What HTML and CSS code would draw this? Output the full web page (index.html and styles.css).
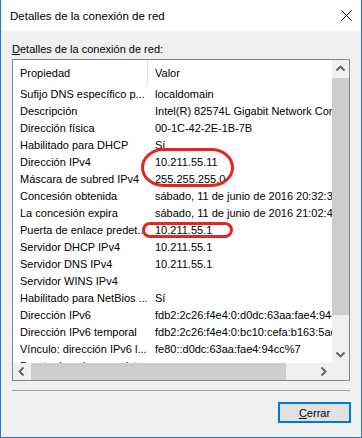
FILE: index.html
```html
<!DOCTYPE html>
<html lang="es">
<head>
<meta charset="utf-8">
<title>Detalles de la conexión de red</title>
<link rel="stylesheet" href="styles.css">
</head>
<body>
<div class="window">
  <div class="titlebar">
    <span class="title">Detalles de la conexión de red</span>
    <svg class="close" width="11" height="11" viewBox="0 0 11 11"><path d="M0.5 0.5 L10.5 10.5 M10.5 0.5 L0.5 10.5" stroke="#000" stroke-width="1" fill="none"/></svg>
  </div>
  <div class="client">
    <div class="caption"><span class="mn">D</span>etalles de la conexión de red:</div>
    <div class="listbox">
      <div class="viewport">
        <div class="header"><div class="c1">Propiedad</div><div class="c2 hsep">Valor</div></div>
        <div class="row"><div class="c1">Sufijo DNS específico p...</div><div class="c2">localdomain</div></div>
        <div class="row"><div class="c1">Descripción</div><div class="c2">Intel(R) 82574L Gigabit Network Connection</div></div>
        <div class="row"><div class="c1">Dirección física</div><div class="c2">00-1C-42-2E-1B-7B</div></div>
        <div class="row"><div class="c1">Habilitado para DHCP</div><div class="c2">Sí</div></div>
        <div class="row"><div class="c1">Dirección IPv4</div><div class="c2">10.211.55.11</div></div>
        <div class="row"><div class="c1">Máscara de subred IPv4</div><div class="c2">255.255.255.0</div></div>
        <div class="row"><div class="c1">Concesión obtenida</div><div class="c2">sábado, 11 de junio de 2016 20:32:35</div></div>
        <div class="row"><div class="c1">La concesión expira</div><div class="c2">sábado, 11 de junio de 2016 21:02:44</div></div>
        <div class="row"><div class="c1">Puerta de enlace predet...</div><div class="c2">10.211.55.1</div></div>
        <div class="row"><div class="c1">Servidor DHCP IPv4</div><div class="c2">10.211.55.1</div></div>
        <div class="row"><div class="c1">Servidor DNS IPv4</div><div class="c2">10.211.55.1</div></div>
        <div class="row"><div class="c1">Servidor WINS IPv4</div><div class="c2"></div></div>
        <div class="row"><div class="c1">Habilitado para NetBios ...</div><div class="c2">Sí</div></div>
        <div class="row"><div class="c1">Dirección IPv6</div><div class="c2">fdb2:2c26:f4e4:0:d0dc:63aa:fae4:94cc</div></div>
        <div class="row"><div class="c1">Dirección IPv6 temporal</div><div class="c2">fdb2:2c26:f4e4:0:bc10:cefa:b163:5ad4</div></div>
        <div class="row"><div class="c1">Vínculo: dirección IPv6 l...</div><div class="c2">fe80::d0dc:63aa:fae4:94cc%7</div></div>
        <div class="row"><div class="c1">Puerta de enlace predet...</div><div class="c2"></div></div>
      </div>
      <div class="vscroll">
        <div class="sbtn"><svg width="17" height="17" viewBox="0 0 17 17"><polyline points="4.5,10.5 8.5,6.5 12.5,10.5" fill="none" stroke="#606060" stroke-width="1.8"/></svg></div>
        <div class="vthumb"></div>
        <div class="fill"></div>
        <div class="sbtn"><svg width="17" height="17" viewBox="0 0 17 17"><polyline points="4.5,6.5 8.5,10.5 12.5,6.5" fill="none" stroke="#606060" stroke-width="1.8"/></svg></div>
      </div>
      <div class="hscroll">
        <div class="sbtn"><svg width="17" height="17" viewBox="0 0 17 17"><polyline points="10.5,4.5 6.5,8.5 10.5,12.5" fill="none" stroke="#606060" stroke-width="1.8"/></svg></div>
        <div class="hthumb"></div>
        <div class="fill"></div>
        <div class="sbtn"><svg width="17" height="17" viewBox="0 0 17 17"><polyline points="6.5,4.5 10.5,8.5 6.5,12.5" fill="none" stroke="#606060" stroke-width="1.8"/></svg></div>
      </div>
      <div class="corner"></div>
    </div>
    <div class="sep"></div>
    <div class="actions">
      <button class="btn" type="button"><span class="mn">C</span>errar</button>
    </div>
  </div>
  <svg class="annot" width="362" height="438" viewBox="0 0 362 438">
    <rect x="142.5" y="149.5" width="90" height="36" rx="21" ry="18" fill="none" stroke="#e5261c" stroke-width="3"/>
    <rect x="143.5" y="223.5" width="88" height="13" rx="6.5" ry="6.5" fill="none" stroke="#e5261c" stroke-width="3"/>
  </svg>
</div>
</body>
</html>
```
FILE: styles.css
```css
html, body {
  margin: 0;
  padding: 0;
  background: #f0f0f0;
}
body {
  font-family: "Liberation Sans", Arial, sans-serif;
  color: #000;
}
.window {
  position: relative;
  width: 362px;
  height: 438px;
  box-sizing: border-box;
  border: 1px solid #1c7bd5;
  border-top: 0;
  background: #f0f0f0;
  display: flex;
  flex-direction: column;
}
.titlebar {
  height: 31px;
  flex: none;
  box-sizing: border-box;
  padding: 2px 9px 0 9px;
  background: #fff;
  display: flex;
  justify-content: space-between;
  align-items: flex-start;
}
.title {
  font-size: 11.5px;
  line-height: 29px;
}
.close {
  margin-top: 8px;
  display: block;
}
.client {
  flex: 1;
  padding: 0 11px;
  display: flex;
  flex-direction: column;
}
.caption {
  margin-top: 10px;
  height: 16px;
  line-height: 16px;
  font-size: 11px;
  margin-bottom: 2px;
  white-space: nowrap;
}
.mn {
  text-decoration: underline;
}
.listbox {
  height: 322px;
  box-sizing: border-box;
  border: 1px solid #828790;
  background: #fff;
  display: grid;
  grid-template-columns: 1fr 17px;
  grid-template-rows: 1fr 17px;
}
.viewport {
  overflow: hidden;
  font-size: 11px;
}
.header {
  display: flex;
  height: 26px;
  line-height: 26px;
  white-space: nowrap;
}
.row {
  display: flex;
  height: 17px;
  line-height: 17px;
  white-space: nowrap;
}
.c1 {
  flex: none;
  width: 134px;
  box-sizing: border-box;
  padding-left: 7px;
  overflow: hidden;
}
.c2 {
  flex: none;
  padding-left: 8px;
}
.header .hsep {
  border-left: 1px solid #e5e5e5;
  padding-left: 7px;
}
.vscroll {
  background: #f0f0f0;
  display: flex;
  flex-direction: column;
}
.hscroll {
  background: #f0f0f0;
  display: flex;
}
.sbtn {
  flex: none;
  width: 17px;
  height: 17px;
}
.sbtn svg {
  display: block;
}
.vthumb {
  flex: none;
  margin-top: 1px;
  height: 237px;
  background: #cdcdcd;
}
.hthumb {
  flex: none;
  margin-left: 1px;
  width: 255px;
  background: #cdcdcd;
}
.fill {
  flex: 1;
}
.corner {
  background: #f0f0f0;
}
.sep {
  margin-top: 9px;
  height: 1px;
  background: #a0a0a0;
}
.actions {
  display: flex;
  justify-content: flex-end;
  margin-top: 11px;
  margin-right: -1px;
}
.btn {
  width: 73px;
  height: 21px;
  box-sizing: border-box;
  border: 2px solid #0078d7;
  background: #e1e1e1;
  font-family: "Liberation Sans", Arial, sans-serif;
  font-size: 11px;
  color: #000;
  padding: 0;
  margin: 0;
}
.annot {
  position: absolute;
  left: -1px;
  top: 0;
  pointer-events: none;
}
```
